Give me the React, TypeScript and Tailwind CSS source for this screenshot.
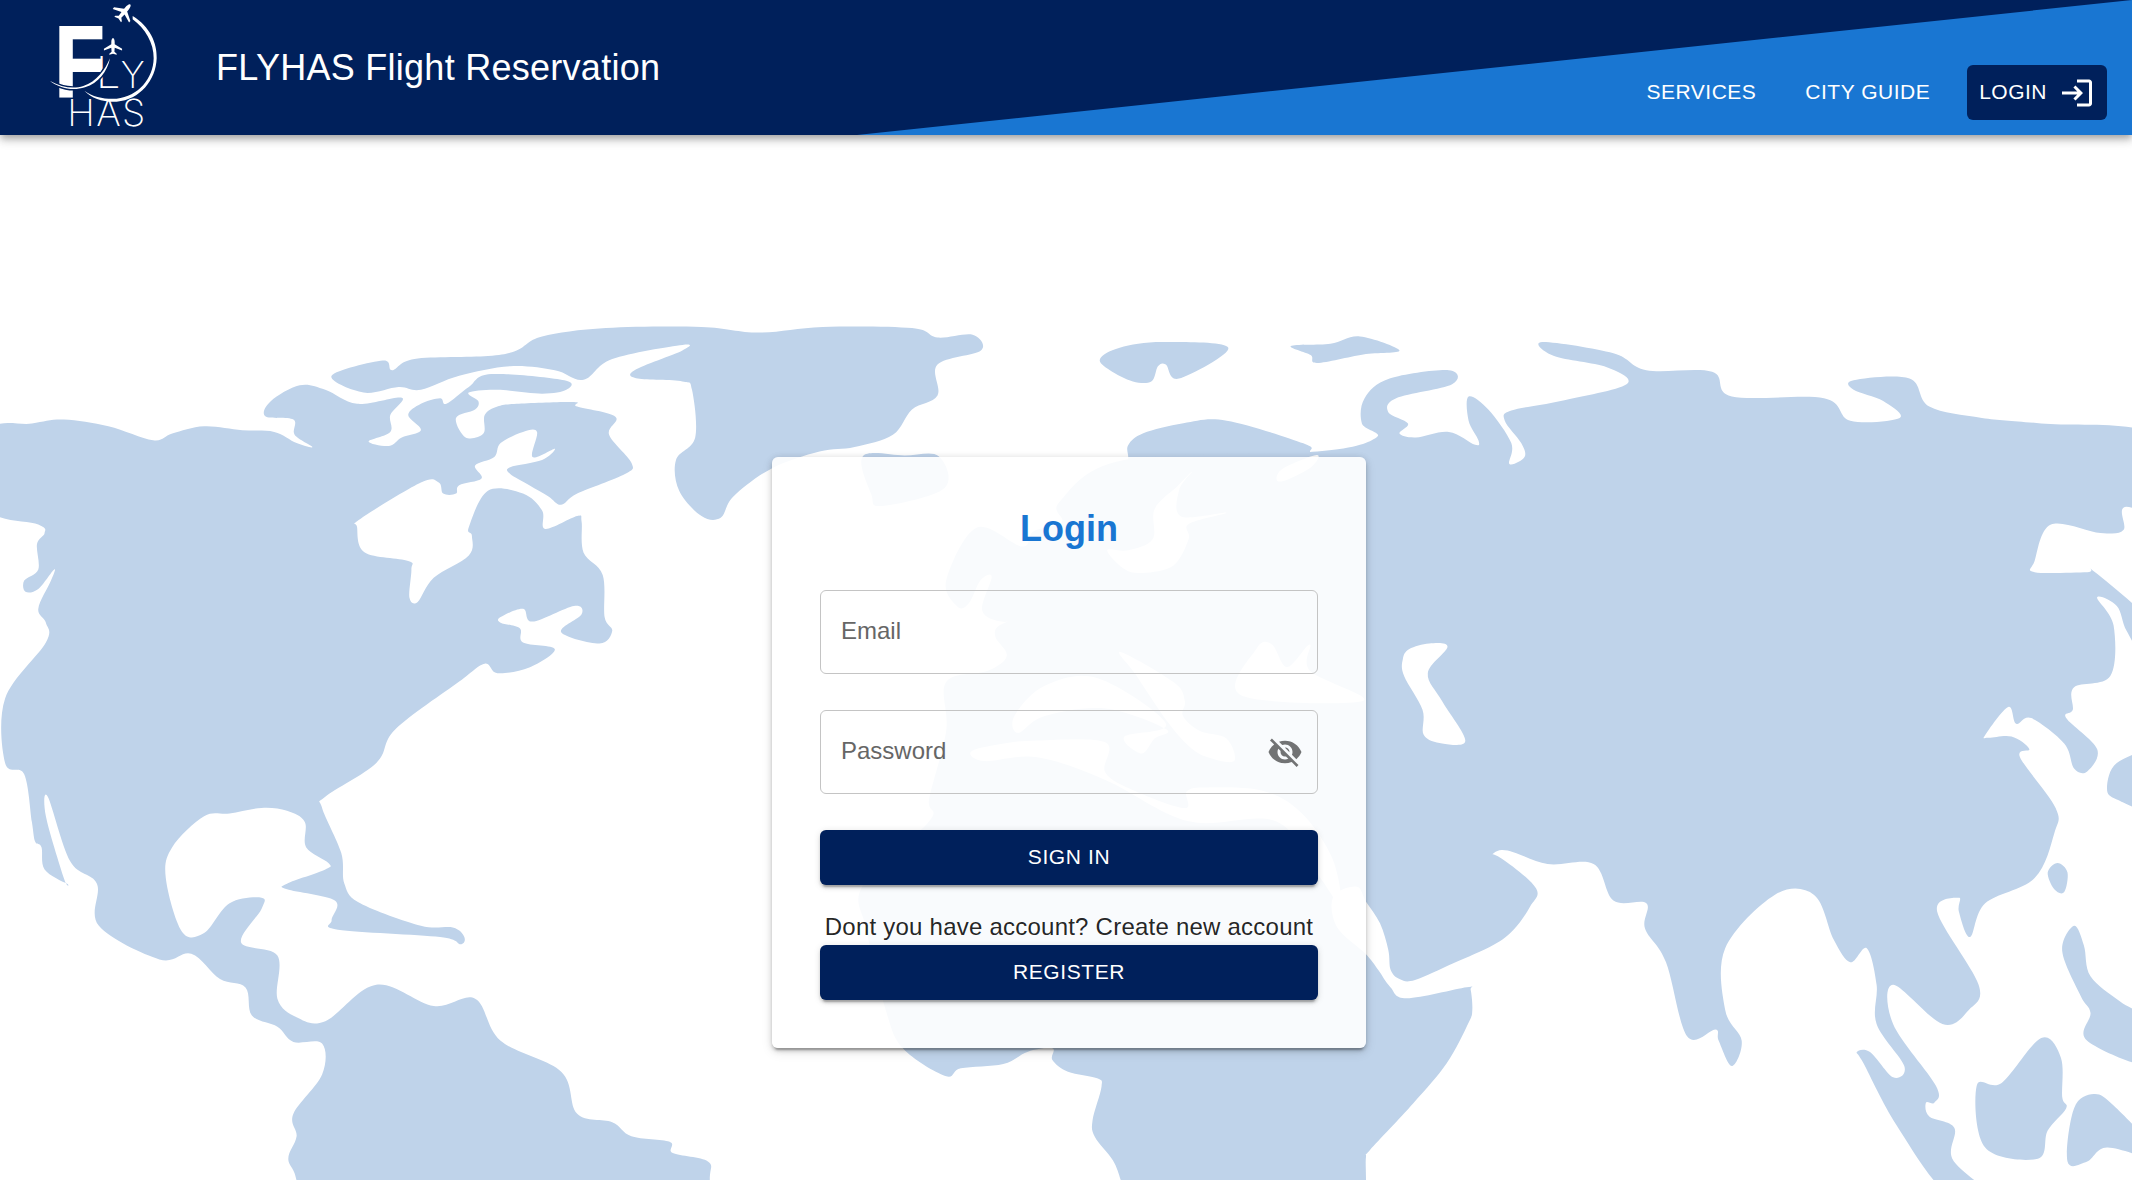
import React from 'react';

type Pt = number[];

// the crops I traced from each have their own offset and scale, so map them back to page pixels
const at = (ox: number, oy: number, sx: number, sy: number) => (pts: Pt[]): Pt[] =>
    pts.map(([x, y]) => [ox + x / sx, oy + y / sy]);
const west = at(0, 300, 1.568, 1.7818);
const east = at(1100, 300, 1.5194, 1.7818);
const red = at(1300, 880, 3, 3);
const south = at(760, 1030, 2.24, 3);
const north = at(850, 380, 3, 3);
const mid = at(772, 460, 2.64, 2.657);

const smooth = (pts: Pt[]) => {
    const n = pts.length;
    let d = `M${pts[0][0].toFixed(1)} ${pts[0][1].toFixed(1)}`;
    for (let i = 0; i < n; i++) {
        const a = pts[(i - 1 + n) % n], b = pts[i], c = pts[(i + 1) % n], e = pts[(i + 2) % n];
        const k = 0.17;
        d += `C${(b[0] + (c[0] - a[0]) * k).toFixed(1)} ${(b[1] + (c[1] - a[1]) * k).toFixed(1)} ${(c[0] - (e[0] - b[0]) * k).toFixed(1)} ${(c[1] - (e[1] - b[1]) * k).toFixed(1)} ${c[0].toFixed(1)} ${c[1].toFixed(1)}`;
    }
    return d + 'Z';
};

const land: Pt[][] = [
    // north + central america, south america
    west([[-20, 235], [50, 220], [100, 213], [170, 225], [240, 250], [270, 238], [320, 225], [380, 232], [430, 235], [465, 255], [490, 262], [462, 240], [460, 213], [416, 207], [425, 180], [470, 152], [510, 160], [560, 185], [630, 174], [612, 205], [612, 235], [578, 252], [610, 260], [630, 245], [660, 232], [640, 205], [660, 185], [690, 175], [700, 185], [735, 155], [770, 132], [885, 143], [888, 160], [850, 167], [780, 160], [735, 165], [750, 180], [745, 195], [715, 210], [730, 245], [758, 238], [760, 205], [780, 190], [810, 185], [900, 182], [905, 190], [965, 208], [955, 240], [990, 290], [980, 310], [905, 345], [880, 365], [860, 350], [830, 330], [800, 310], [800, 298], [850, 285], [870, 265], [835, 280], [842, 235], [820, 235], [785, 255], [775, 280], [745, 295], [755, 318], [720, 330], [715, 345], [695, 345], [688, 325], [660, 325], [565, 390], [560, 405], [572, 450], [640, 465], [645, 480], [642, 530], [655, 538], [680, 495], [735, 455], [740, 420], [735, 405], [765, 340], [820, 345], [850, 375], [855, 408], [905, 385], [912, 395], [915, 450], [945, 490], [948, 565], [960, 590], [940, 612], [880, 592], [912, 560], [900, 545], [835, 573], [820, 550], [785, 565], [785, 575], [815, 585], [820, 610], [870, 622], [830, 655], [780, 665], [760, 648], [720, 680], [620, 765], [590, 825], [510, 885], [505, 905], [535, 985], [540, 1040], [565, 1075], [660, 1115], [710, 1118], [728, 1135], [722, 1148], [690, 1135], [530, 1122], [520, 1105], [525, 1070], [450, 1050], [450, 1040], [510, 1015], [515, 1003], [480, 975], [478, 930], [450, 910], [410, 905], [360, 915], [320, 920], [270, 975], [260, 1030], [285, 1125], [320, 1128], [360, 1075], [410, 1065], [410, 1085], [378, 1145], [435, 1168], [435, 1245], [465, 1278], [510, 1285], [590, 1220], [680, 1258], [745, 1245], [785, 1320], [880, 1375], [905, 1450], [960, 1465], [990, 1490], [1050, 1500], [1055, 1520], [1110, 1535], [1113, 1570], [1113, 1680], [470, 1680], [465, 1570], [452, 1530], [465, 1490], [460, 1450], [505, 1380], [505, 1325], [460, 1322], [435, 1295], [395, 1275], [385, 1225], [345, 1210], [300, 1165], [250, 1175], [155, 1115], [152, 1040], [110, 1000], [75, 885], [72, 920], [100, 1030], [105, 1040], [70, 1015], [65, 975], [55, 965], [50, 930], [38, 845], [8, 825], [8, 710], [72, 610], [72, 575], [60, 550], [80, 500], [85, 480], [60, 515], [40, 520], [38, 500], [60, 480], [58, 435], [70, 415], [60, 400], [-20, 370]]),
    // arctic islands + greenland
    west([[520, 135], [600, 108], [615, 125], [650, 105], [765, 100], [810, 90], [850, 65], [950, 50], [1100, 48], [1190, 58], [1290, 48], [1430, 50], [1470, 67], [1525, 62], [1538, 90], [1470, 115], [1470, 170], [1430, 195], [1400, 240], [1340, 262], [1285, 270], [1210, 300], [1150, 350], [1130, 388], [1100, 385], [1065, 340], [1060, 285], [1090, 245], [1085, 160], [1070, 145], [1000, 140], [995, 125], [1070, 90], [1070, 80], [960, 105], [915, 142], [870, 125], [800, 118], [720, 135], [660, 160], [625, 155], [570, 165]]),
    mid([[240, -10], [350, -12], [440, -10], [455, 75], [290, 122], [262, 90]]),
    east([[0, 105], [30, 85], [95, 75], [195, 85], [120, 140], [100, 115], [88, 118], [78, 145], [50, 145], [15, 125]]),
    east([[290, 82], [350, 78], [395, 65], [455, 90], [400, 97], [330, 112], [320, 98]]),
    north([[835, 235], [835, 195], [880, 160], [1000, 130], [1130, 122], [1360, 190], [1380, 215], [1370, 245], [1290, 300], [1200, 340], [1000, 400], [835, 300]]),
    // eurasia + africa
    [
        ...east([[330, 270], [420, 245], [398, 220], [402, 175], [440, 140], [530, 125], [535, 150], [450, 175], [438, 200], [468, 220], [455, 238], [480, 245], [530, 235], [570, 258], [575, 250], [560, 215], [560, 172], [590, 195], [625, 255], [622, 292], [645, 280], [640, 255], [615, 215], [625, 197], [700, 180], [800, 150], [770, 120], [690, 100], [672, 75], [780, 95], [830, 125], [930, 128], [960, 172], [1100, 175], [1140, 215], [1215, 210], [1190, 180], [1145, 160], [1145, 143], [1230, 140], [1260, 190], [1340, 210], [1430, 220], [1600, 240], [1600, 365], [1555, 370], [1555, 410], [1520, 415], [1445, 400], [1420, 465], [1420, 485], [1500, 485], [1512, 485], [1600, 580], [1590, 640], [1560, 590], [1545, 545], [1515, 530], [1540, 580], [1535, 670], [1480, 690], [1478, 730], [1468, 745], [1515, 800], [1500, 840], [1480, 835], [1465, 790], [1415, 745], [1392, 755], [1380, 725], [1345, 775], [1350, 780], [1385, 778], [1412, 800], [1398, 815], [1452, 905], [1450, 950], [1420, 1030], [1345, 1075], [1322, 1135], [1305, 1090], [1305, 1065], [1272, 1090], [1335, 1220], [1320, 1265], [1280, 1290], [1205, 1220], [1205, 1290], [1270, 1400], [1268, 1430], [1255, 1430], [1260, 1455], [1298, 1475], [1295, 1530], [1345, 1590], [1285, 1590], [1210, 1470], [1160, 1360], [1150, 1340], [1170, 1340], [1205, 1385], [1222, 1365], [1180, 1290], [1180, 1220], [1165, 1155], [1140, 1180], [1115, 1140], [1085, 1060], [1025, 1060], [950, 1155], [950, 1265], [975, 1320], [960, 1365], [940, 1320], [935, 1300], [892, 1312], [860, 1180], [828, 1120], [830, 1075], [780, 1070], [750, 1005], [680, 1005], [610, 980], [575, 1012], [545, 990], [500, 925], [515, 915], [560, 960], [575, 980], [610, 995]]),
        ...red([[708, 25], [690, 80], [640, 150], [580, 195], [460, 250], [345, 300], [300, 298], [272, 270], [265, 210], [240, 130], [198, 65], [170, 20], [100, 50], [110, 140], [195, 220], [235, 270], [270, 320], [320, 355], [500, 322], [512, 330], [517, 390], [505, 430], [440, 550], [340, 670], [210, 810], [198, 830], [198, 900], [198, 1000]]),
        ...south([[815, 500], [808, 450], [790, 390], [750, 320], [745, 270], [765, 170], [755, 145], [690, 125], [655, 90], [655, 55], [600, 65], [545, 102], [450, 115], [415, 138], [320, 55]]),
        ...mid([[300, 1460], [250, 1250], [240, 1130], [415, 960], [415, 900], [460, 720], [460, 590], [570, 560], [620, 520], [590, 470], [600, 440], [665, 415], [610, 430], [555, 400], [580, 310], [550, 320], [520, 380], [490, 390], [460, 320], [540, 180], [660, 230], [690, 190], [765, 165], [760, 110], [930, 0]]),
    ],
    east([[1440, 1020], [1455, 1003], [1470, 1020], [1465, 1055], [1450, 1050]]),
    east([[1530, 870], [1545, 825], [1600, 810], [1600, 905], [1545, 890]]),
    east([[1480, 1115], [1495, 1150], [1505, 1205], [1550, 1250], [1600, 1290], [1600, 1365], [1500, 1320], [1505, 1270], [1490, 1240], [1462, 1160]]),
    east([[1430, 1315], [1460, 1350], [1462, 1420], [1468, 1440], [1440, 1480], [1425, 1530], [1345, 1510], [1332, 1400], [1370, 1395]]),
    east([[1510, 1415], [1540, 1435], [1600, 1510], [1600, 1530], [1530, 1510], [1500, 1535], [1470, 1535], [1480, 1440]]),
];

// water that sits inside the land shapes, mostly only faintly visible through the card
const water: Pt[][] = [
    mid([[1110, 30], [1075, 80], [1080, 150], [1200, 140], [1100, 170], [1100, 210], [1060, 280], [980, 300], [930, 290], [885, 240], [940, 240], [1005, 210], [1010, 130], [1070, 70]]),
    mid([[525, 775], [600, 755], [700, 745], [880, 750], [880, 830], [960, 880], [1090, 925], [1095, 880], [1150, 870], [1300, 880], [1400, 940], [1480, 1060], [1500, 1180], [1440, 1100], [1330, 960], [1100, 960], [880, 850], [700, 790], [560, 800]]),
    mid([[640, 680], [720, 600], [860, 580], [1040, 700], [930, 735], [975, 780], [1010, 740], [1040, 715], [880, 660], [720, 680], [650, 725]]),
    mid([[920, 510], [1060, 590], [1090, 640], [1085, 680], [1130, 720], [1200, 740], [1220, 800], [1150, 790], [1100, 760], [1040, 690], [960, 570]]),
    mid([[1238, 625], [1280, 500], [1320, 490], [1360, 550], [1420, 490], [1420, 560], [1560, 640]]),
    north([[1280, 300], [1300, 265], [1400, 225], [1385, 260], [1310, 300]]),
    // caspian
    east([[470, 622], [500, 612], [528, 618], [498, 665], [520, 715], [555, 785], [520, 790], [492, 775], [490, 730], [462, 670], [460, 640]]),
];

const WorldMap = () => (
    <svg viewBox="0 0 2132 1180" className="absolute inset-0 h-[1180px] w-[2132px]">
        {land.map((pts, i) => <path key={i} d={smooth(pts)} fill="#bfd3ea" />)}
        {water.map((pts, i) => <path key={i} d={smooth(pts)} fill="#ffffff" />)}
    </svg>
);

const PLANE = 'M0 -28C4 -28 6 -20 6 -12L6 -6L32 10L32 16L6 6L5 20L13 27L13 31L0 27L-13 31L-13 27L-5 20L-6 6L-32 16L-32 10L-6 -6L-6 -12C-6 -20 -4 -28 0 -28Z';

const Logo = () => (
    <svg viewBox="0 0 450 405" className="h-[135px] w-[150px] shrink-0" fill="#fff">
        <text transform="translate(74 289) scale(.82 1)" fontFamily="'Liberation Sans', sans-serif" fontWeight="700" fontSize="298" stroke="#fff" strokeWidth="6">F</text>
        <text x="198" y="265" fontFamily="Inter, sans-serif" fontWeight="200" fontSize="130">L</text>
        <text x="272" y="265" fontFamily="Inter, sans-serif" fontWeight="200" fontSize="110">Y</text>
        <text x="112" y="378" fontFamily="Inter, sans-serif" fontWeight="200" fontSize="112" letterSpacing="4">HAS</text>
        <path d="M60 243C95 262 130 268 160 258C200 245 225 210 240 175C232 215 205 250 165 262C125 275 85 262 60 243Z" stroke="#00205b" strokeWidth="9" paintOrder="stroke" />
        <path d="M308 48C360 80 382 130 380 175C378 240 330 300 260 305C220 307 185 295 163 272C190 292 225 298 260 296C325 290 370 235 371 175C372 130 345 85 308 58Z" />
        <path d={PLANE} transform="translate(283 35) rotate(40)" />
        <path d={PLANE} transform="translate(249 138) scale(.85)" />
    </svg>
);

const NavButton = ({ label }: { label: string }) => (
    <button className="h-[55px] rounded-md px-3 pb-[2px] text-[21px] tracking-[0.5px] text-white">{label}</button>
);

const Header = () => (
    <header className="relative z-10 flex h-[135px] items-center justify-between bg-[#00205b] pl-[30px] pr-[25px] shadow-[0_3px_6px_-1.5px_rgba(0,0,0,0.2),0_6px_7.5px_0_rgba(0,0,0,0.14),0_1.5px_15px_0_rgba(0,0,0,0.12)]">
        <svg viewBox="0 0 2132 135" className="absolute inset-0 h-[135px] w-[2132px]">
            <polygon points="857,135 2132,0 2132,135" fill="#1976d2" />
        </svg>
        <div className="relative flex items-center gap-[36px]">
            <Logo />
            <h1 className="text-[36px] font-normal tracking-[0.27px] text-white">FLYHAS Flight Reservation</h1>
        </div>
        <nav className="relative flex items-center gap-[25px] self-end pb-[15px]">
            <NavButton label="SERVICES" />
            <NavButton label="CITY GUIDE" />
            <button className="flex h-[55px] items-center gap-3 rounded-md bg-[#00205b] pl-3 pr-3 text-[21px] tracking-[0.5px] text-white">
                <span className="pb-[2px]">LOGIN</span>
                <svg viewBox="0 0 24 24" className="h-9 w-9" fill="currentColor">
                    <path d="M11 7 9.6 8.4l2.6 2.6H2v2h10.2l-2.6 2.6L11 17l5-5-5-5zm9 12h-8v2h8c1.1 0 2-.9 2-2V5c0-1.1-.9-2-2-2h-8v2h8v14z" />
                </svg>
            </button>
        </nav>
    </header>
);

const Field = ({ placeholder, type, children }: { placeholder: string; type: string; children?: React.ReactNode }) => (
    <div className="flex h-[84px] items-center rounded-md border border-[#c4c4c4] pl-[20px] pr-[14px]">
        <input type={type} placeholder={placeholder} className="mb-[2px] min-w-0 flex-1 bg-transparent text-[24px] outline-none placeholder:text-[#666666]" />
        {children}
    </div>
);

const SolidButton = ({ label }: { label: string }) => (
    <button className="h-[55px] w-full rounded-md bg-[#00205b] pb-[2px] text-[21px] tracking-[0.6px] text-white shadow-[0_4.5px_1.5px_-3px_rgba(0,0,0,0.2),0_3px_3px_0_rgba(0,0,0,0.14),0_1.5px_7.5px_0_rgba(0,0,0,0.12)]">
        {label}
    </button>
);

export default function App() {
    return (
        <div className="relative h-[1180px] w-[2132px] overflow-hidden bg-white font-['Liberation_Sans',Arial,sans-serif]">
            <WorldMap />
            <Header />
            <main className="relative flex justify-center pl-[6px] pt-[322px]">
                <div className="flex h-[591px] w-[594px] flex-col rounded-md bg-white/90 px-[48px] pt-[48px] shadow-[0_4.5px_1.5px_-3px_rgba(0,0,0,0.2),0_3px_3px_0_rgba(0,0,0,0.14),0_1.5px_7.5px_0_rgba(0,0,0,0.12),0_4px_12px_0_rgba(0,0,0,0.1)]">
                    <h2 className="text-center text-[36px] font-bold leading-[48px] text-[#1976d2]">Login</h2>
                    <form className="mt-[37px] flex flex-col gap-[36px]">
                        <Field placeholder="Email" type="email" />
                        <Field placeholder="Password" type="password">
                            <svg viewBox="0 0 24 24" className="h-9 w-9 shrink-0" fill="#000000" fillOpacity="0.54">
                                <path d="M12 7c2.76 0 5 2.24 5 5 0 .65-.13 1.26-.36 1.83l2.92 2.92c1.51-1.26 2.7-2.89 3.43-4.75-1.73-4.39-6-7.5-11-7.5-1.4 0-2.74.25-3.98.7l2.16 2.16C10.74 7.13 11.35 7 12 7zM2 4.27l2.28 2.28.46.46C3.08 8.3 1.78 10.02 1 12c1.73 4.39 6 7.5 11 7.5 1.55 0 3.03-.3 4.38-.84l.42.42L19.73 22 21 20.73 3.27 3 2 4.27zM7.53 9.8l1.55 1.55c-.05.21-.08.43-.08.65 0 1.66 1.34 3 3 3 .22 0 .44-.03.65-.08l1.55 1.55c-.67.33-1.41.53-2.2.53-2.76 0-5-2.24-5-5 0-.79.2-1.53.53-2.2zm4.31-.78l3.15 3.15.02-.16c0-1.66-1.34-3-3-3l-.17.01z" />
                            </svg>
                        </Field>
                        <SolidButton label="SIGN IN" />
                    </form>
                    <p className="mt-[24px] text-center text-[24px] leading-[36px] tracking-[0.23px] text-[#000000de]">Dont you have account? Create new account</p>
                    <SolidButton label="REGISTER" />
                </div>
            </main>
        </div>
    );
}
